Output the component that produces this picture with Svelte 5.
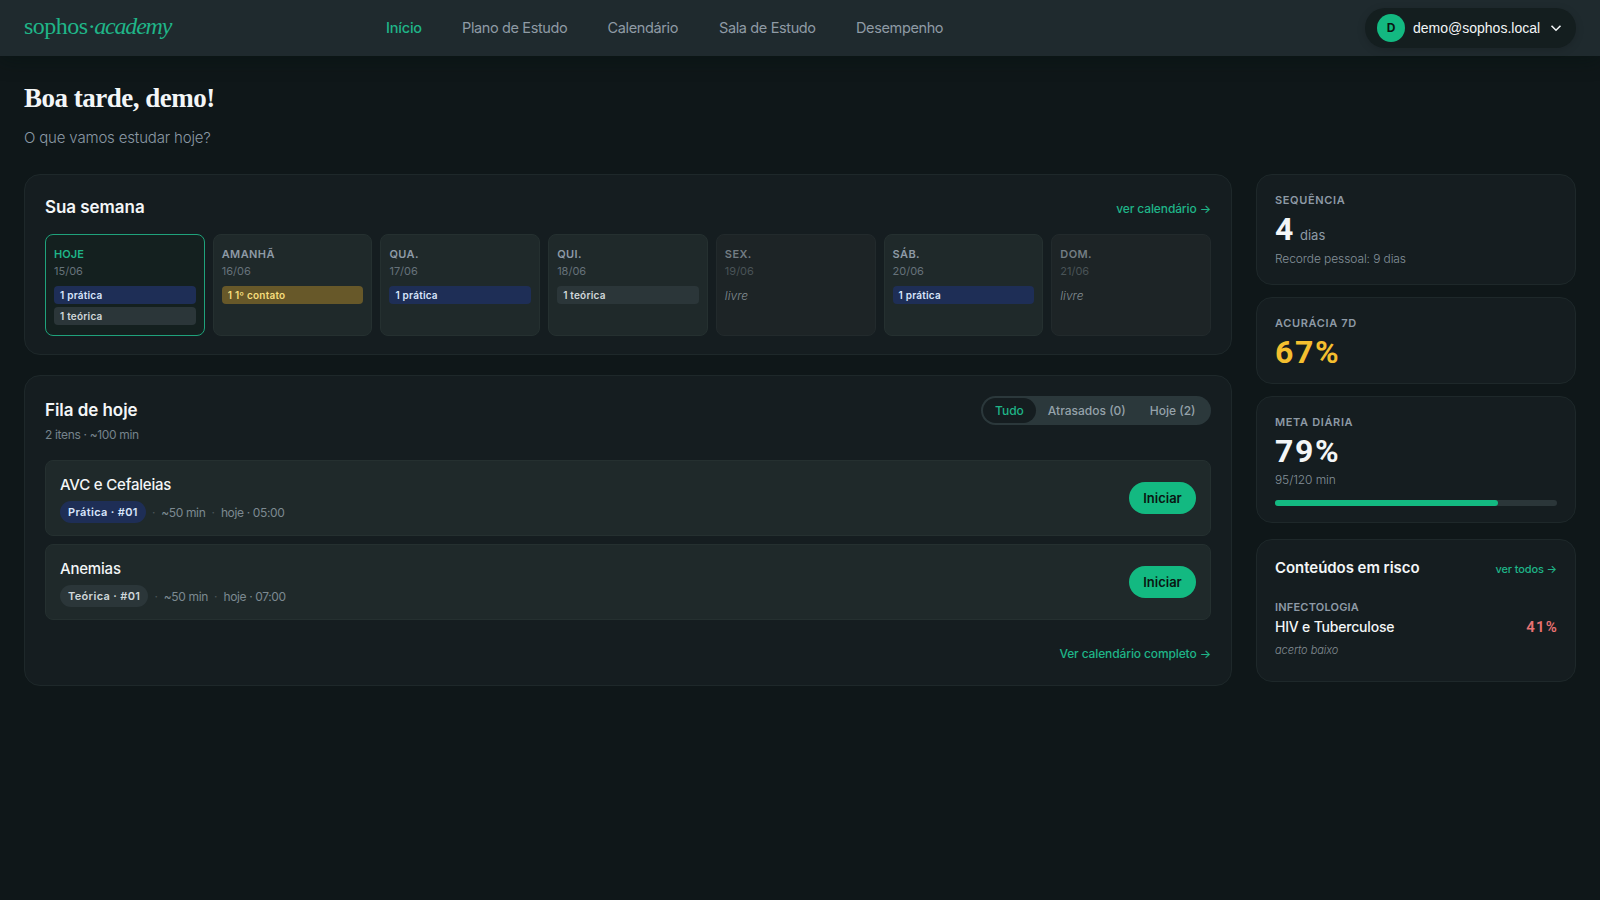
<script lang="ts">
	type Chip = { label: string; kind: 'pratica' | 'teorica' | 'contato' };
	type Day = { name: string; date: string; today?: boolean; chips: Chip[] };

	const links = [
		{ label: 'Início', width: 36 },
		{ label: 'Plano de Estudo', width: 105.5 },
		{ label: 'Calendário', width: 71.5 },
		{ label: 'Sala de Estudo', width: 97 },
		{ label: 'Desempenho', width: 88 }
	];
	let current = $state('Início');

	const days: Day[] = [
		{
			name: 'Hoje',
			date: '15/06',
			today: true,
			chips: [
				{ label: '1 prática', kind: 'pratica' },
				{ label: '1 teórica', kind: 'teorica' }
			]
		},
		{ name: 'Amanhã', date: '16/06', chips: [{ label: '1 1º contato', kind: 'contato' }] },
		{ name: 'Qua.', date: '17/06', chips: [{ label: '1 prática', kind: 'pratica' }] },
		{ name: 'Qui.', date: '18/06', chips: [{ label: '1 teórica', kind: 'teorica' }] },
		{ name: 'Sex.', date: '19/06', chips: [] },
		{ name: 'Sáb.', date: '20/06', chips: [{ label: '1 prática', kind: 'pratica' }] },
		{ name: 'Dom.', date: '21/06', chips: [] }
	];

	const tabs = ['Tudo', 'Atrasados (0)', 'Hoje (2)'];
	let tab = $state('Tudo');

	const queue = [
		{ title: 'AVC e Cefaleias', kind: 'pratica', tag: 'Prática · #01', when: 'hoje · 05:00' },
		{ title: 'Anemias', kind: 'teorica', tag: 'Teórica · #01', when: 'hoje · 07:00' }
	];

	const goal = { done: 95, total: 120 };
	const percent = Math.round((goal.done / goal.total) * 100);
</script>

<header>
	<a class="logo" href="#top">sophos<span>·</span><em>academy</em></a>
	<nav>
		{#each links as { label, width }}
			<button
				class="nav-link"
				class:active={current === label}
				style="width: {width}px"
				onclick={() => (current = label)}>{label}</button
			>
		{/each}
	</nav>
	<button class="user">
		<span class="avatar">D</span>
		<span class="email">demo@sophos.local</span>
		<svg width="12" height="12" viewBox="0 0 12 12" fill="none">
			<path d="M1.5 3.8 6 8.2l4.5-4.4" stroke="currentColor" stroke-width="1.6" />
		</svg>
	</button>
</header>

<main>
	<h1>Boa tarde, demo!</h1>
	<p class="lead">O que vamos estudar hoje?</p>

	<div class="layout">
		<div class="primary">
			<section class="card week">
				<div class="week-head">
					<h2>Sua semana</h2>
					<a class="link" href="#calendario">ver calendário <i>→</i></a>
				</div>
				<div class="days">
					{#each days as day}
						<div class="day" class:today={day.today} class:free={!day.chips.length}>
							<strong>{day.name}</strong>
							<span class="date">{day.date}</span>
							{#each day.chips as chip}
								<span class="chip {chip.kind}">{chip.label}</span>
							{:else}
								<em>livre</em>
							{/each}
						</div>
					{/each}
				</div>
			</section>

			<section class="card queue">
				<div class="queue-head">
					<div>
						<h2>Fila de hoje</h2>
						<p>2 itens · ~100 min</p>
					</div>
					<div class="tabs">
						{#each tabs as label}
							<button class:active={tab === label} onclick={() => (tab = label)}>{label}</button>
						{/each}
					</div>
				</div>
				<div class="items">
					{#each queue as item}
						<article>
							<div>
								<h3>{item.title}</h3>
								<div class="meta">
									<span class="tag {item.kind}">{item.tag}</span>
									<b>·</b>
									<span>~50 min</span>
									<b>·</b>
									<span>{item.when}</span>
								</div>
							</div>
							<button class="start">Iniciar</button>
						</article>
					{/each}
				</div>
				<a class="link full" href="#calendario">Ver calendário completo <i>→</i></a>
			</section>
		</div>

		<aside>
			<section class="card stat streak">
				<h4>Sequência</h4>
				<div class="value">4<small>dias</small></div>
				<p>Recorde pessoal: 9 dias</p>
			</section>
			<section class="card stat accuracy">
				<h4>Acurácia 7d</h4>
				<div class="value warn">67%</div>
			</section>
			<section class="card stat goal">
				<h4>Meta diária</h4>
				<div class="value">{percent}%</div>
				<p class="minutes">{goal.done}/{goal.total} min</p>
				<div class="bar"><div class="fill" style="width: {percent}%"></div></div>
			</section>
			<section class="card risk">
				<div class="risk-head">
					<h2>Conteúdos em risco</h2>
					<a class="link" href="#riscos">ver todos <i>→</i></a>
				</div>
				<h4>Infectologia</h4>
				<div class="topic">
					<span>HIV e Tuberculose</span>
					<strong>41%</strong>
				</div>
				<em>acerto baixo</em>
			</section>
		</aside>
	</div>
</main>

<style>
	:global(body) {
		min-height: 100vh;
		color: #f3f6f7;
		background: #0f1719;
		font-family: Inter, 'Noto Sans', sans-serif;
	}

	:global(body *) {
		box-sizing: border-box;
	}

	h1,
	h2,
	h3,
	h4,
	p {
		margin: 0;
	}

	button {
		padding: 0;
		border: 0;
		background: none;
		color: inherit;
		font: inherit;
		white-space: nowrap;
		cursor: pointer;
	}

	a {
		color: #1fb588;
		text-decoration: none;
	}

	header {
		display: grid;
		grid-template-columns: 362px 1fr auto;
		align-items: center;
		height: 56px;
		padding: 0 24px;
		background: #1f2a2e;
		box-shadow: 0 4px 20px rgb(0 20 15 / 40%);
	}

	.logo {
		padding-bottom: 3px;
		font-family: 'Liberation Serif', serif;
		font-size: 24px;
		letter-spacing: -0.5px;
		white-space: nowrap;

		& span {
			letter-spacing: -1.4px;
		}

		& em {
			letter-spacing: -1.2px;
		}
	}

	nav {
		display: flex;
		gap: 40px;
	}

	.nav-link {
		display: flex;
		color: #8f9ba5;
		font-size: 14.5px;
		letter-spacing: -0.37px;
		line-height: 24px;

		&.active {
			color: #1fb588;
			font-weight: 500;
			letter-spacing: -0.2px;
		}
	}

	.user {
		display: flex;
		align-items: center;
		gap: 8px;
		width: 211px;
		height: 40px;
		padding: 0 14px 0 12px;
		border-radius: 20px;
		background: #141e1f;
		box-shadow: 0 2px 8px rgb(0 0 0 / 15%);
		font-family: 'Liberation Sans', sans-serif;
		font-size: 14px;

		& svg {
			flex: none;
			margin-left: 3px;
		}
	}

	.avatar {
		flex: none;
		width: 28px;
		border-radius: 50%;
		color: #0a1512;
		background: #13b981;
		font-family: Inter, sans-serif;
		font-size: 12px;
		font-weight: 700;
		line-height: 28px;
		text-align: center;
	}

	.email {
		width: 126px;
		text-align: left;
	}

	main {
		padding: 24px;
	}

	h1 {
		font-family: 'Liberation Serif', serif;
		font-size: 27px;
		font-weight: 700;
		letter-spacing: -0.5px;
		line-height: 36px;
	}

	.lead {
		margin-top: 9px;
		color: #8b99a5;
		font-size: 15px;
		font-weight: 300;
		letter-spacing: -0.17px;
		line-height: 26px;
	}

	.layout {
		display: grid;
		grid-template-columns: 1fr 320px;
		gap: 24px;
		align-items: start;
		margin-top: 23px;
	}

	.primary {
		display: grid;
		gap: 20px;
	}

	.card {
		border: 1px solid #1e282a;
		border-radius: 16px;
		background: #151d20;
	}

	h2 {
		font-size: 17px;
		font-weight: 600;
		letter-spacing: -0.05px;
	}

	.link {
		font-size: 12px;
		font-weight: 500;
		letter-spacing: -0.12px;
		white-space: nowrap;

		& i {
			font-style: normal;
		}
	}

	.week {
		height: 181px;
		padding: 20px;
	}

	.week-head {
		display: flex;
		align-items: center;
		justify-content: space-between;
		height: 24px;
		margin-bottom: 15px;

		& .link {
			padding-top: 3px;
		}
	}

	.days {
		display: grid;
		grid-template-columns: repeat(7, 1fr);
		gap: 8px;
	}

	.day {
		height: 102px;
		padding: 10px 8px;
		border: 1px solid #253030;
		border-radius: 8px;
		background: #1f292a;

		& strong {
			display: block;
			color: #8e9aa6;
			font-size: 11px;
			font-weight: 600;
			letter-spacing: 0.4px;
			line-height: 18px;
			text-transform: uppercase;
		}

		& em {
			display: block;
			color: #828c92;
			font-size: 12px;
			font-weight: 300;
			line-height: 19px;
		}

		&.today {
			border-color: #1fa27b;
			background: #14201f;

			& strong {
				color: #1fb588;
				letter-spacing: 0.1px;
			}
		}

		&.free {
			border-color: #222a2c;
			background: #1d2426;

			& strong {
				color: #737d83;
			}

			& .date {
				color: #495356;
			}
		}
	}

	.date {
		display: block;
		margin-bottom: 6px;
		color: #66727a;
		font-size: 11px;
		line-height: 17px;
	}

	.chip {
		display: block;
		height: 18px;
		padding: 0 6px;
		border-radius: 4px;
		font-size: 10px;
		font-weight: 600;
		letter-spacing: 0.22px;
		line-height: 18px;

		& + .chip {
			margin-top: 3px;
		}
	}

	.pratica {
		color: #d8e5fb;
		background: #1e2e56;
	}

	.teorica {
		color: #d0d7da;
		background: #2b3639;
	}

	.contato {
		color: #f5dd7d;
		background: #675829;
	}

	.queue {
		height: 311px;
		padding: 20px;
	}

	.queue-head {
		display: flex;
		align-items: flex-start;
		justify-content: space-between;
		height: 64px;

		& h2 {
			padding-top: 1px;
			line-height: 27px;
		}

		& p {
			color: #75838c;
			font-size: 12px;
			letter-spacing: -0.34px;
			line-height: 22px;
		}
	}

	.tabs {
		display: flex;
		width: 230px;
		height: 29px;
		padding: 2px;
		border-radius: 15px;
		background: #2b383b;
		color: #95a2aa;
		font-size: 12px;
		font-weight: 500;
		letter-spacing: 0.08px;

		& button {
			padding: 0 12px;
			border-radius: 13px;

			&.active {
				color: #1fb588;
				background: #151d20;
			}
		}
	}

	.items {
		display: grid;
		gap: 8px;
	}

	article {
		display: flex;
		align-items: center;
		justify-content: space-between;
		height: 76px;
		padding: 0 14px;
		border: 1px solid #253030;
		border-radius: 8px;
		background: #1f292a;
	}

	h3 {
		font-size: 15px;
		font-weight: 500;
		letter-spacing: -0.2px;
		line-height: 24px;
	}

	.meta {
		display: flex;
		align-items: center;
		gap: 6.2px;
		margin-top: 4px;
		color: #7c8991;
		font-size: 12px;
		letter-spacing: -0.36px;

		& b {
			color: #4b5659;
			font-weight: 400;
		}
	}

	.tag {
		height: 22px;
		padding: 0 8px;
		border-radius: 11px;
		font-size: 11px;
		font-weight: 600;
		letter-spacing: 0.34px;
		line-height: 22px;
	}

	.start {
		width: 67px;
		height: 32px;
		border-radius: 16px;
		color: #0a1512;
		background: #13b981;
		font-size: 13px;
		font-weight: 600;
	}

	.full {
		display: block;
		margin-top: 25px;
		line-height: 18px;
		text-align: right;
	}

	aside {
		display: grid;
		gap: 12px;
	}

	.stat {
		padding: 16px 18px;

		& p {
			color: #84919a;
			font-size: 12px;
			font-weight: 300;
			letter-spacing: -0.1px;
			line-height: 20px;
		}
	}

	.streak {
		height: 111px;
	}

	.accuracy {
		height: 87px;
	}

	.goal {
		height: 127px;
	}

	h4 {
		color: #8e9aa6;
		font-size: 11px;
		font-weight: 600;
		letter-spacing: 0.65px;
		line-height: 18px;
		text-transform: uppercase;
	}

	.value {
		height: 40px;
		font-family: Roboto, sans-serif;
		font-size: 32px;
		font-weight: 700;
		letter-spacing: 1.6px;
		line-height: 40px;

		& small {
			margin-left: 5px;
			color: #8e9aa6;
			font-family: Inter, sans-serif;
			font-size: 13px;
			font-weight: 400;
			letter-spacing: 0;
		}
	}

	.warn {
		color: #f4bf2f;
	}

	.stat .minutes {
		line-height: 18px;
	}

	.bar {
		height: 6px;
		margin-top: 11px;
		border-radius: 3px;
		background: #2b3639;
	}

	.fill {
		height: 100%;
		border-radius: 3px;
		background: #13b981;
	}

	.risk {
		height: 143px;
		margin-top: 4px;
		padding: 15px 18px;

		& h4 {
			letter-spacing: 0.2px;
		}

		& em {
			color: #828c92;
			font-size: 11px;
			font-weight: 300;
			letter-spacing: -0.05px;
		}
	}

	.risk-head {
		display: flex;
		align-items: center;
		justify-content: space-between;
		height: 24px;
		margin-bottom: 19px;

		& h2 {
			font-size: 15px;
		}

		& .link {
			padding-top: 3px;
			font-size: 11px;
		}
	}

	.topic {
		display: flex;
		justify-content: space-between;
		font-size: 14px;
		font-weight: 500;
		letter-spacing: -0.2px;
		line-height: 22px;

		& strong {
			margin-right: -1px;
			color: #e87272;
			font-family: Roboto, sans-serif;
			font-size: 15px;
			font-weight: 600;
			letter-spacing: 1.2px;
		}
	}
</style>
